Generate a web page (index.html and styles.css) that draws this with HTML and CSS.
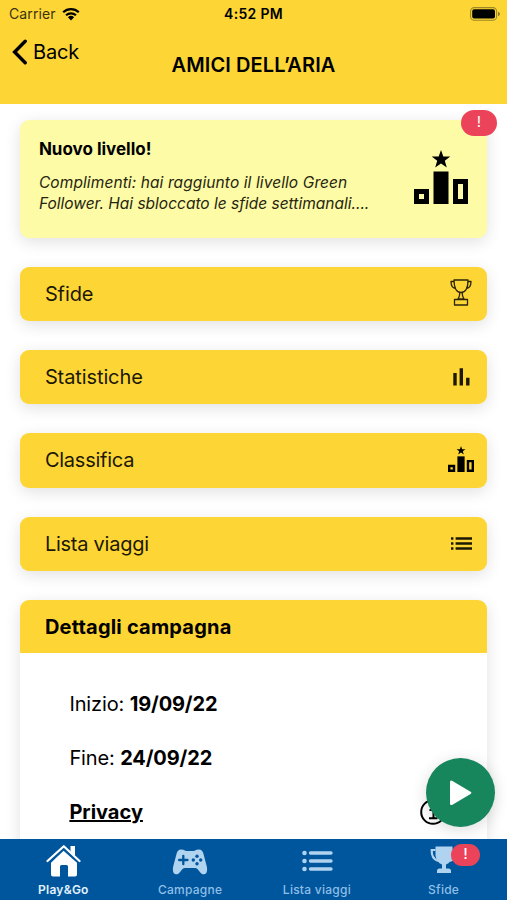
FILE: index.html
```html
<!DOCTYPE html>
<html lang="it">
<head>
    <meta charset="utf-8">
    <meta name="viewport" content="width=device-width, initial-scale=1.0">
    <title>Play&amp;Go</title>
    <link rel="stylesheet" href="styles.css">
</head>
<body>
    <svg class="symbols">
        <symbol id="icon-ranking" viewBox="0 0 54 54">
            <path d="M27 0l2.3 6.6h7l-5.5 4.2 2 6.8-5.8-4-5.8 4 2-6.8-5.5-4.2h7z"/>
            <path d="M19.5 21.5h15V54h-15z"/>
            <path fill-rule="evenodd" d="M0 39h15v15H0zM5 44v5h5v-5zM39 29h15v25H39zM44 34v15h5V34z"/>
        </symbol>
    </svg>

    <header class="header">
        <div class="status-bar">
            <div class="carrier">
                <span>Carrier</span>
                <svg class="wifi" viewBox="0 0 18 14">
                    <path d="M1.2 5.2a11.5 11.5 0 0 1 15.6 0M4 8.2a7.5 7.5 0 0 1 10 0" fill="none" stroke="#000" stroke-width="2.2"/>
                    <path d="M5.9 10.3a4.5 4.5 0 0 1 6.2 0L9 13.5z"/>
                </svg>
            </div>
            <span class="time">4:52 PM</span>
            <svg class="battery" viewBox="0 0 30 14">
                <rect x=".6" y=".6" width="26" height="12.6" rx="3.8" fill="none" stroke="#6b5c22" stroke-opacity=".65" stroke-width="1.1"/>
                <rect x="2.2" y="2.3" width="22.8" height="9.2" rx="2"/>
                <path d="M28 4.8q2 .8 2 2.2t-2 2.2z" fill="#8e7a26"/>
            </svg>
        </div>
        <a class="back">
            <svg viewBox="0 0 16 26"><path d="M13.2 2.2L2.6 13l10.6 10.8" fill="none" stroke="#000" stroke-width="3.4" stroke-linecap="round" stroke-linejoin="miter"/></svg>
            <span>Back</span>
        </a>
        <h1>AMICI DELL’ARIA</h1>
    </header>

    <main class="content">
        <section class="card notice">
            <div class="notice-text">
                <h2>Nuovo livello!</h2>
                <p><span class="first">Complimenti: hai raggiunto il livello Green</span><br>Follower. Hai sbloccato le sfide settimanali....</p>
            </div>
            <svg class="notice-icon"><use href="#icon-ranking"/></svg>
            <span class="badge">!</span>
        </section>

        <a class="card row">
            <span>Sfide</span>
            <svg class="icon-cup" viewBox="0 0 22 27" fill="none" stroke="#2b2408" stroke-width="1.3" stroke-linejoin="round">
                <path d="M4 1h14c0 7-2 12.500-7 12.500S4 8 4 1zM4 2.500H1c0 4 1.500 6.500 4.500 7M18 2.500h3c0 4-1.500 6.500-4.500 7M9.800 13.500c0 3-.3 4.500-1.800 6.500h6c-1.500-2-1.800-3.500-1.800-6.500M4.500 20.500h13v5.500h-13z"/>
            </svg>
        </a>
        <a class="card row">
            <span>Statistiche</span>
            <svg class="icon-stats" viewBox="0 0 17 18"><path d="M.3 5h3.400v12.500H.3zM6.600.3H10v17.200H6.600zM13.100 9.800h3.400v7.700h-3.400z"/></svg>
        </a>
        <a class="card row">
            <span class="tight">Classifica</span>
            <svg class="icon-ranking"><use href="#icon-ranking"/></svg>
        </a>
        <a class="card row">
            <span class="tight">Lista viaggi</span>
            <svg class="icon-list" viewBox="0 0 21 13"><path d="M0 .3h2.400v2.400H0zM0 5.300h2.400v2.400H0zM0 10.300h2.400v2.400H0zM4.600.3H21v2.400H4.600zM4.600 5.300H21v2.400H4.600zM4.600 10.300H21v2.400H4.600z"/></svg>
        </a>

        <section class="card details">
            <h2>Dettagli campagna</h2>
            <div class="details-body">
                <p>Inizio: <b>19/09/22</b></p>
                <p>Fine: <b>24/09/22</b></p>
                <p class="privacy">
                    <a>Privacy</a>
                    <svg viewBox="0 0 26 26" fill="none" stroke="#000" stroke-width="2">
                        <circle cx="13" cy="13" r="11.800"/>
                        <path d="M9.500 11h4v8M9 19.200h8.500"/>
                        <circle cx="13" cy="7" r=".7"/>
                    </svg>
                </p>
            </div>
        </section>
    </main>

    <button class="play">
        <svg viewBox="0 0 22 26"><path d="M2 .8L20.600 11.700q1.600 1.100 0 2.200L2 24.900Q0 25.700 0 23.500V2.200Q0 0 2 .8z" fill="#fff"/></svg>
    </button>

    <nav class="tabs">
        <a class="tab active">
            <svg viewBox="0 0 36 34">
                <path d="M25.500 2H30v10l-4.500-4zM18.500 6.800L32 18.800v11.700q0 2-2 2h-7V22.500q0-1.500-1.500-1.500h-5q-1.500 0-1.500 1.500v10H8q-2 0-2-2V18.800z"/>
                <path d="M2.500 17L18.800 2.200 34.500 17" fill="none" stroke="#fff" stroke-width="2.200" stroke-linecap="round" stroke-linejoin="round"/>
                <path d="M5.500 17.700L18.700 5.700 32 17.700" fill="none" stroke="#00569d" stroke-width="1"/>
            </svg>
            <span>Play&amp;Go</span>
        </a>
        <a class="tab">
            <svg viewBox="0 0 36 34">
                <path d="M9 5.500q-3.500 0-4.500 4.500L1.200 22.500C-.5 31 5 32.500 8.500 27.500l2-2.500q1-1 2.500-1h10q1.500 0 2.500 1l2 2.500c3.500 5 9 3.500 7.300-5L31.500 10Q30.500 5.500 27 5.500q-2.500 0-4 1-1 .5-2 .5h-6q-1 0-2-.5-1.500-1-4-1z"/>
                <path d="M11.300 11.800v8.400M7.100 16h8.400" stroke="#00569d" stroke-width="2.300" stroke-linecap="round"/>
                <g fill="#00569d"><circle cx="25" cy="12.300" r="1.700"/><circle cx="21.300" cy="16" r="1.700"/><circle cx="28.700" cy="16" r="1.700"/><circle cx="25" cy="19.700" r="1.700"/></g>
            </svg>
            <span>Campagne</span>
        </a>
        <a class="tab">
            <svg viewBox="0 0 36 34">
                <circle cx="5.500" cy="9" r="2.300"/><circle cx="5.500" cy="17" r="2.300"/><circle cx="5.500" cy="25" r="2.300"/>
                <path d="M11.500 9h20.500M11.500 17h20.500M11.500 25h20.500" stroke="#b0d3ef" stroke-width="3.400" stroke-linecap="round"/>
            </svg>
            <span>Lista viaggi</span>
        </a>
        <a class="tab">
            <svg viewBox="0 0 36 34">
                <path d="M9.500 2.500h17v9q-1 7-6.500 9v4h2.500q2.500 0 2.500 2.500v2H11V27q0-2.500 2.500-2.500H16v-4q-5.500-2-6.500-9z"/>
                <path d="M9.500 6H5.700c-.2 5 2 9.500 6.300 11M26.500 6h3.800c.2 5-2 9.500-6.300 11" fill="none" stroke="#b0d3ef" stroke-width="2.200"/>
            </svg>
            <span>Sfide</span>
            <span class="badge">!</span>
        </a>
    </nav>
</body>
</html>
```
FILE: styles.css
```css
* {
    box-sizing: border-box;
}

body {
    margin: 0;
    height: 900px;
    display: flex;
    flex-direction: column;
    overflow: hidden;
    position: relative;
    background-color: #fff;
    color: #000;
    font-family: Inter, "Liberation Sans", sans-serif;
}

h1, h2, p {
    margin: 0;
}

.symbols {
    position: absolute;
    width: 0;
    height: 0;
}

/* Header */
.header {
    flex: none;
    height: 103.500px;
    background-color: #fdd635;
}

.status-bar {
    height: 27px;
    padding: 0 7px 0 9px;
    display: grid;
    grid-template-columns: 1fr auto 1fr;
    align-items: center;
    font-size: 14px;
}

.carrier {
    display: flex;
    align-items: center;
    gap: 6px;
    color: #3b3210;
}

.carrier span {
    letter-spacing: 0.1px;
}

.wifi {
    width: 18px;
    height: 14px;
}

.time {
    font-weight: 600;
    font-size: 14px;
    letter-spacing: 0.3px;
    margin-left: -2px;
}

.battery {
    width: 30px;
    height: 14px;
    justify-self: end;
}

.back {
    display: flex;
    align-items: center;
    gap: 5px;
    height: 25px;
    margin-top: 12px;
    padding-left: 12px;
    font-size: 20px;
    letter-spacing: -0.2px;
}

.back svg {
    width: 16px;
    height: 26px;
}

.header h1 {
    margin-top: -11px;
    line-height: 25px;
    text-align: center;
    font-size: 20px;
    font-weight: 600;
    letter-spacing: 0.1px;
}

/* Cards */
.content {
    flex: 1;
    min-height: 0;
    overflow: hidden;
    padding: 16px 20px 0 20.400px;
    display: flex;
    flex-direction: column;
    gap: 29px;
}

.card {
    flex: none;
    border-radius: 9px;
    box-shadow: 0 4px 16px rgba(0, 0, 0, 0.12);
}

.notice {
    position: relative;
    height: 118.500px;
    padding: 19px 19px 0 18.500px;
    display: flex;
    justify-content: space-between;
    background-color: #fdfba6;
}

.notice h2 {
    font-size: 17px;
    font-weight: 700;
    line-height: 21px;
}

.notice p {
    margin-top: 12px;
    font-size: 15.500px;
    font-style: italic;
    line-height: 21px;
    color: #26250f;
    white-space: nowrap;
}

.first {
    letter-spacing: 0.1px;
}

.notice-icon {
    width: 54px;
    height: 54px;
    margin-top: 11px;
}

.badge {
    position: absolute;
    display: flex;
    align-items: center;
    justify-content: center;
    background-color: #eb445a;
    color: #fff;
    border-radius: 13px;
}

.notice .badge {
    top: -10px;
    right: -10px;
    width: 36px;
    height: 26px;
    padding-bottom: 2px;
    font-size: 15px;
}

.row {
    height: 54.200px;
    padding: 0 14px 0 24.500px;
    display: flex;
    align-items: center;
    justify-content: space-between;
    background-color: #fdd635;
    font-size: 20px;
    letter-spacing: -0.1px;
    color: #1c1805;
}

.tight {
    letter-spacing: -0.250px;
}

.row svg {
    fill: #1c1805;
}

.row .icon-cup {
    width: 22px;
    height: 27px;
    margin: -4px 1px 0 0;
    fill: none;
}

.row .icon-stats {
    width: 17px;
    height: 18px;
    margin-right: 3px;
}

.row .icon-ranking {
    width: 26px;
    height: 26px;
    margin: -3px -1px 0 0;
    fill: #000;
}

.row .icon-list {
    width: 21px;
    height: 13px;
    margin-right: 1px;
}

.details {
    height: 300px;
    background-color: #fff;
}

.details h2 {
    height: 53.500px;
    padding-left: 24.500px;
    line-height: 54px;
    border-radius: 9px 9px 0 0;
    background-color: #fdd635;
    font-size: 20px;
    font-weight: 700;
    letter-spacing: 0.200px;
}

.details-body {
    padding: 23.500px 41px 0 49px;
    font-size: 20px;
    letter-spacing: -0.130px;
}

.details-body p {
    height: 54px;
    line-height: 54px;
}

.privacy {
    display: flex;
    align-items: center;
    justify-content: space-between;
}

.privacy a {
    font-weight: 700;
    letter-spacing: 0;
    text-decoration: underline;
    text-decoration-thickness: 1.500px;
}

.privacy svg {
    width: 26px;
    height: 26px;
}

.play {
    position: absolute;
    right: 12px;
    bottom: 73px;
    width: 69px;
    height: 69px;
    padding: 0;
    border: none;
    border-radius: 50%;
    background-color: #17865d;
    box-shadow: 0 3px 16px rgba(0, 0, 0, 0.14);
}

.play svg {
    display: block;
    width: 22px;
    height: 26px;
    margin-left: 24px;
}

/* Bottom tabs */
.tabs {
    flex: none;
    height: 61.500px;
    display: flex;
    background-color: #00569d;
}

.tab {
    position: relative;
    flex: 1;
    padding-top: 5px;
    display: flex;
    flex-direction: column;
    align-items: center;
    color: #8fbfe6;
    font-size: 12px;
    font-weight: 500;
    letter-spacing: 0.250px;
}

.tab svg {
    width: 36px;
    height: 34px;
    fill: #b0d3ef;
}

.tab > span:not(.badge) {
    margin-top: 4px;
    line-height: 15px;
}

.active {
    color: #e4f3ff;
    font-weight: 600;
}

.active svg {
    fill: #fff;
}

.tab .badge {
    top: 5px;
    left: 71px;
    width: 29px;
    height: 22px;
    padding-bottom: 3px;
    font-size: 15px;
}
```
